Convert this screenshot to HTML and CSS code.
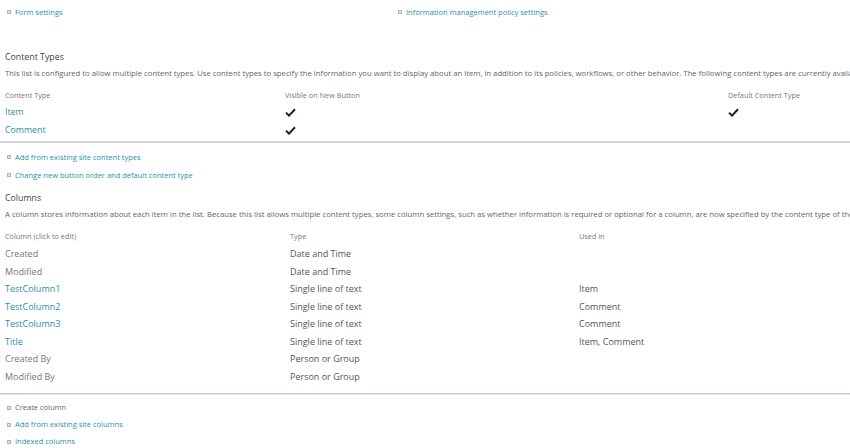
FILE: index.html
```html
<!DOCTYPE html>
<html>
<head>
<meta charset="utf-8">
<link rel="stylesheet" href="styles.css">
</head>
<body>
<div class="page">
  <div class="top-links">
    <div class="bl"><span class="sq"></span><a class="link">Form settings</a></div>
    <div class="bl"><span class="sq"></span><a class="link">Information management policy settings</a></div>
  </div>

  <div class="section-title ct-title">Content Types</div>
  <div class="desc">This list is configured to allow multiple content types. Use content types to specify the information you want to display about an item, in addition to its policies, workflows, or other behavior. The following content types are currently available in this list:</div>

  <div class="ct-table">
    <div class="ct-row hdr"><span>Content Type</span><span>Visible on New Button</span><span>Default Content Type</span></div>
    <div class="ct-row first"><a class="link">Item</a><span class="chk"><svg width="11" height="9" viewBox="0 0 11 9"><path d="M1 4.6 L4 7.6 L10 1.2" fill="none" stroke="#15222e" stroke-width="2"/></svg></span><span class="chk"><svg width="11" height="9" viewBox="0 0 11 9"><path d="M1 4.6 L4 7.6 L10 1.2" fill="none" stroke="#15222e" stroke-width="2"/></svg></span></div>
    <div class="ct-row"><a class="link">Comment</a><span class="chk"><svg width="11" height="9" viewBox="0 0 11 9"><path d="M1 4.6 L4 7.6 L10 1.2" fill="none" stroke="#15222e" stroke-width="2"/></svg></span><span></span></div>
  </div>
</div>
<div class="rule1"></div>
<div class="page">
  <div class="link-list ct-links">
    <div class="bl"><span class="sq"></span><a class="link">Add from existing site content types</a></div>
    <div class="bl"><span class="sq"></span><a class="link">Change new button order and default content type</a></div>
  </div>

  <div class="section-title col-title">Columns</div>
  <div class="desc">A column stores information about each item in the list. Because this list allows multiple content types, some column settings, such as whether information is required or optional for a column, are now specified by the content type of the item.</div>

  <div class="col-table">
    <div class="col-row hdr"><span>Column (click to edit)</span><span>Type</span><span>Used in</span></div>
    <div class="col-row first"><span>Created</span><span class="dark">Date and Time</span><span></span></div>
    <div class="col-row"><span>Modified</span><span class="dark">Date and Time</span><span></span></div>
    <div class="col-row"><a class="link">TestColumn1</a><span class="dark">Single line of text</span><span class="dark">Item</span></div>
    <div class="col-row"><a class="link">TestColumn2</a><span class="dark">Single line of text</span><span class="dark">Comment</span></div>
    <div class="col-row"><a class="link">TestColumn3</a><span class="dark">Single line of text</span><span class="dark">Comment</span></div>
    <div class="col-row"><a class="link">Title</a><span class="dark">Single line of text</span><span class="dark">Item, Comment</span></div>
    <div class="col-row"><span>Created By</span><span class="dark">Person or Group</span><span></span></div>
    <div class="col-row"><span>Modified By</span><span class="dark">Person or Group</span><span></span></div>
  </div>
</div>
<div class="rule2"></div>
<div class="page">
  <div class="link-list col-links">
    <div class="bl"><span class="sq"></span><span class="plain">Create column</span></div>
    <div class="bl"><span class="sq"></span><a class="link">Add from existing site columns</a></div>
    <div class="bl"><span class="sq"></span><a class="link">Indexed columns</a></div>
  </div>
</div>
</body>
</html>
```

FILE: styles.css
```css
html, body {
  margin: 0;
  padding: 0;
  background: #ffffff;
  overflow: hidden;
}
body {
  font-family: "Open Sans", "Noto Sans", sans-serif;
  color: #6a6a6a;
  width: 850px;
  height: 448px;
}
.page {
  padding-left: 5px;
}
.link {
  color: #2a8fa9;
  text-decoration: none;
}
.top-links {
  padding-top: 5px;
  display: grid;
  grid-template-columns: 391px 1fr;
  font-size: 7.5px;
  line-height: 14px;
}
.bl {
  display: flex;
  align-items: center;
  padding-left: 2px;
  white-space: nowrap;
}
.sq {
  width: 2px;
  height: 2px;
  border: 1px solid #a9b4bb;
  background: #dfe4e7;
  margin-right: 4px;
  flex: none;
}
.section-title {
  font-size: 8.8px;
  line-height: 16px;
  color: #444;
}
.ct-title { margin-top: 30px; }
.col-title { margin-top: 6px; }
.desc {
  font-size: 7.72px;
  line-height: 14px;
  color: #666;
  white-space: nowrap;
  overflow: hidden;
  margin-top: 1px;
}
.ct-table { margin-top: 8px; }
.ct-row {
  display: grid;
  grid-template-columns: 280px 443px 1fr;
  font-size: 8.8px;
  line-height: 18px;
  align-items: center;
}
.ct-row.hdr, .col-row.hdr {
  font-size: 7.3px;
  line-height: 14px;
  color: #777;
}
.ct-row.first { margin-top: 1px; }
.chk {
  display: flex;
  align-items: center;
  height: 18px;
}
.rule1 {
  margin-top: 2px;
  height: 2px;
  background: #d4d4d4;
}
.link-list {
  display: flex;
  flex-direction: column;
  font-size: 7.5px;
}
.ct-links { margin-top: 5px; line-height: 18px; }
.col-links { margin-top: 4px; line-height: 17px; }
.col-table { margin-top: 8px; }
.col-row {
  display: grid;
  grid-template-columns: 285px 289px 1fr;
  font-size: 9px;
  line-height: 17.5px;
  color: #777;
}
.col-row.first { margin-top: 2px; }
.dark { color: #555; }
.plain { color: #666; }
.rule2 {
  margin-top: 8px;
  height: 1px;
  background: #c5ccd3;
  border-bottom: 1px solid #e4e8ec;
}
```
